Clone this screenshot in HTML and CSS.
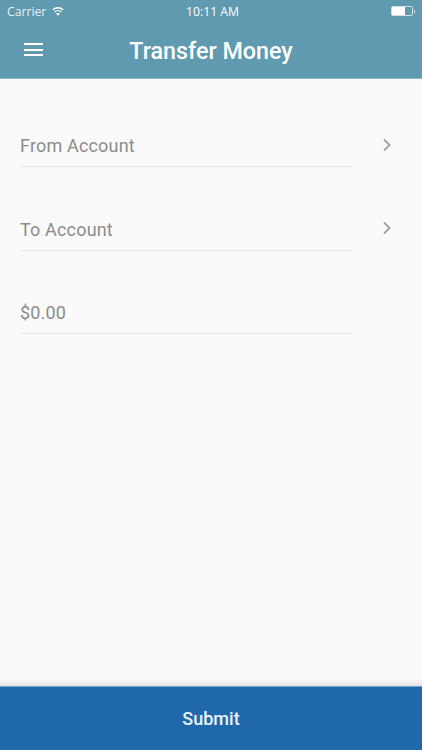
FILE: index.html
```html
<!DOCTYPE html>
<html>
<head>
  <meta charset="UTF-8">
  <title>Transfer Money</title>
  <link rel="stylesheet" href="styles.css">
</head>
<body>
  <div class="screen">
    <div class="header">
      <div class="status-bar">
        <div class="status-left">
          <span class="carrier">Carrier</span>
          <svg class="wifi" width="12" height="9" viewBox="0 0 13 10">
            <path d="M6.5 9.8 4.4 7.4a3 3 0 0 1 4.2 0z" fill="#fff"/>
            <path d="M2.7 5.6a5.5 5.5 0 0 1 7.6 0" fill="none" stroke="#fff" stroke-width="1.5"/>
            <path d="M.7 3.2a8.4 8.4 0 0 1 11.6 0" fill="none" stroke="#fff" stroke-width="1.5"/>
          </svg>
        </div>
        <span class="time">10:11 AM</span>
        <div class="battery">
          <div class="battery-body"><div class="battery-level"></div></div>
          <div class="battery-tip"></div>
        </div>
      </div>
      <div class="nav-bar">
        <button class="menu-button">
          <span></span><span></span><span></span>
        </button>
        <h1>Transfer Money</h1>
      </div>
    </div>

    <div class="form">
      <div class="form-row">
        <div class="field">From Account</div>
        <svg class="chevron" width="10" height="14" viewBox="0 0 10 14">
          <path d="M2 1.5 7.5 7 2 12.5" fill="none" stroke="#a3a3a3" stroke-width="2"/>
        </svg>
      </div>
      <div class="form-row">
        <div class="field">To Account</div>
        <svg class="chevron" width="10" height="14" viewBox="0 0 10 14">
          <path d="M2 1.5 7.5 7 2 12.5" fill="none" stroke="#a3a3a3" stroke-width="2"/>
        </svg>
      </div>
      <div class="form-row">
        <div class="field">$0.00</div>
      </div>
    </div>

    <button class="submit">Submit</button>
  </div>
</body>
</html>
```

FILE: styles.css
```css
html, body {
  margin: 0;
  padding: 0;
}
body {
  font-family: Roboto, "Liberation Sans", sans-serif;
  background-color: #fafafa;
}
.screen {
  width: 422px;
  height: 750px;
  display: flex;
  flex-direction: column;
  overflow: hidden;
}
.header {
  height: 78px;
  background-color: #5f9ab1;
  border-bottom: 1px solid #8db5c5;
  color: white;
}
.status-bar {
  height: 22px;
  padding: 0 7px;
  display: grid;
  grid-template-columns: 1fr auto 1fr;
  align-items: center;
  font-family: "Open Sans", sans-serif;
  font-size: 12.2px;
}
.status-left {
  display: flex;
  align-items: center;
  gap: 6px;
}
.carrier {
  color: #e6f0f4;
}
.time {
  margin-left: 3px;
}
.battery {
  justify-self: end;
  display: flex;
  align-items: center;
}
.battery-body {
  width: 20px;
  height: 8px;
  border: 1px solid #cfe0e7;
  border-radius: 2px;
}
.battery-level {
  width: 13px;
  height: 8px;
  background-color: white;
}
.battery-tip {
  width: 1px;
  height: 3px;
  margin-left: 1px;
  background-color: #cfe0e7;
}
.nav-bar {
  height: 56px;
  display: flex;
  align-items: center;
  justify-content: center;
  position: relative;
}
.nav-bar h1 {
  margin: 2px 0 0 0;
  font-size: 23.3px;
  font-weight: 500;
}
.menu-button {
  position: absolute;
  left: 24px;
  top: 21px;
  width: 19px;
  padding: 0;
  background: none;
  border: none;
  display: flex;
  flex-direction: column;
  gap: 3.5px;
}
.menu-button span {
  display: block;
  height: 2px;
  background-color: white;
}
.form {
  flex: 1;
  padding-top: 46px;
  box-shadow: inset 0 -10px 10px -10px rgba(0,0,0,0.2);
}
.form-row {
  display: flex;
  align-items: center;
  height: 42px;
  margin-bottom: 41.5px;
  padding-left: 20px;
}
.field {
  width: 332px;
  height: 42px;
  line-height: 42px;
  box-sizing: border-box;
  border-bottom: 1px solid #e6e6e6;
  color: #8c8c8c;
  font-size: 18px;
  letter-spacing: 0.17px;
}
.chevron {
  margin: 0 0 3px 30px;
}
.submit {
  height: 64px;
  border: none;
  border-top: 1px solid #7ba6cc;
  background-color: #1f69aa;
  color: #eaf2f8;
  font-family: Roboto, sans-serif;
  font-size: 18px;
  font-weight: 500;
}
```
